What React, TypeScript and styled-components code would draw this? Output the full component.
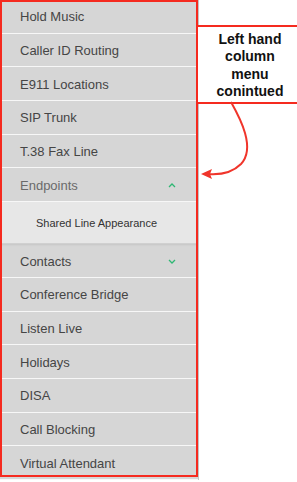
import React from 'react';
import styled, { createGlobalStyle } from 'styled-components';

const GlobalStyle = createGlobalStyle`
  html, body {
    margin: 0;
    padding: 0;
    background: #ffffff;
    overflow: hidden;
  }
  body {
    font-family: 'Liberation Sans', Arial, Helvetica, sans-serif;
  }
`;

const Page = styled.div`
  position: relative;
  width: 297px;
  height: 482px;
  overflow: hidden;
  background: #fff;
`;

const Menu = styled.ul`
  list-style: none;
  margin: 0;
  padding: 0;
  width: 198px;
  border-right: 1px solid #c4c4c4;
  background: #d6d6d6;
`;

const Row = styled.li<{ $active?: boolean; $flush?: boolean }>`
  display: flex;
  align-items: center;
  justify-content: space-between;
  box-sizing: border-box;
  height: 33.66px;
  padding: 1px 20px 0;
  border-bottom: 1px solid #f7f7f7;
  font-size: 13px;
  color: ${p => (p.$active ? '#6a6a6a' : '#454545')};
  box-shadow: ${p => (p.$flush ? 'inset 0 2px 2px -1px rgba(0,0,0,0.08)' : 'none')};
`;

const SubRow = styled.li`
  display: flex;
  align-items: center;
  box-sizing: border-box;
  height: 42.5px;
  padding: 1px 0 0 36px;
  background: #e7e7e7;
  border-bottom: 1px solid #d0d0d0;
  font-size: 11px;
  color: #333;
`;

const Chevron = styled.svg`
  width: 8px;
  height: 5px;
  margin-right: 2px;
  flex: none;
`;

const Frame = styled.div`
  position: absolute;
  left: 0;
  top: 0;
  width: 194px;
  height: 473px;
  border: 2px solid #f52a1f;
  pointer-events: none;
`;

const Note = styled.div`
  position: absolute;
  left: 196px;
  top: 25px;
  width: 104px;
  height: 73px;
  padding-top: 2px;
  box-sizing: content-box;
  border: 2px solid #f52a1f;
  background: #fff;
  display: flex;
  align-items: center;
  justify-content: center;
  text-align: center;
  font-weight: 700;
  font-size: 14px;
  line-height: 17.5px;
  color: #111;
`;

const Arrow = styled.svg`
  position: absolute;
  left: 190px;
  top: 95px;
  width: 80px;
  height: 90px;
  overflow: visible;
`;

const Up = () => (
  <Chevron viewBox="0 0 8 5">
    <path d="M1 4 L4 1 L7 4" fill="none" stroke="#2fb874" strokeWidth="1.3" />
  </Chevron>
);

const Down = () => (
  <Chevron viewBox="0 0 8 5">
    <path d="M1 1 L4 4 L7 1" fill="none" stroke="#2fb874" strokeWidth="1.3" />
  </Chevron>
);

const top = ['Hold Music', 'Caller ID Routing', 'E911 Locations', 'SIP Trunk', 'T.38 Fax Line'];
const bottom = ['Conference Bridge', 'Listen Live', 'Holidays', 'DISA', 'Call Blocking', 'Virtual Attendant'];

export default function App() {
  return (
    <Page>
      <GlobalStyle />
      <Menu>
        {top.map(t => (
          <Row key={t}>{t}</Row>
        ))}
        <Row $active>
          Endpoints
          <Up />
        </Row>
        <SubRow>Shared Line Appearance</SubRow>
        <Row $flush>
          Contacts
          <Down />
        </Row>
        {bottom.map(t => (
          <Row key={t}>{t}</Row>
        ))}
      </Menu>
      <Frame />
      <Note>
        Left hand
        <br />
        column
        <br />
        menu
        <br />
        conintued
      </Note>
      <Arrow viewBox="190 95 80 90">
        <path
          d="M231 102 C 240 118, 256 148, 241 164 C 232 173, 218 175, 207 174"
          fill="none"
          stroke="#f0352b"
          strokeWidth="2"
        />
        <polygon points="201,174 212,169 210,174 212,179" fill="#f0352b" />
      </Arrow>
    </Page>
  );
}
